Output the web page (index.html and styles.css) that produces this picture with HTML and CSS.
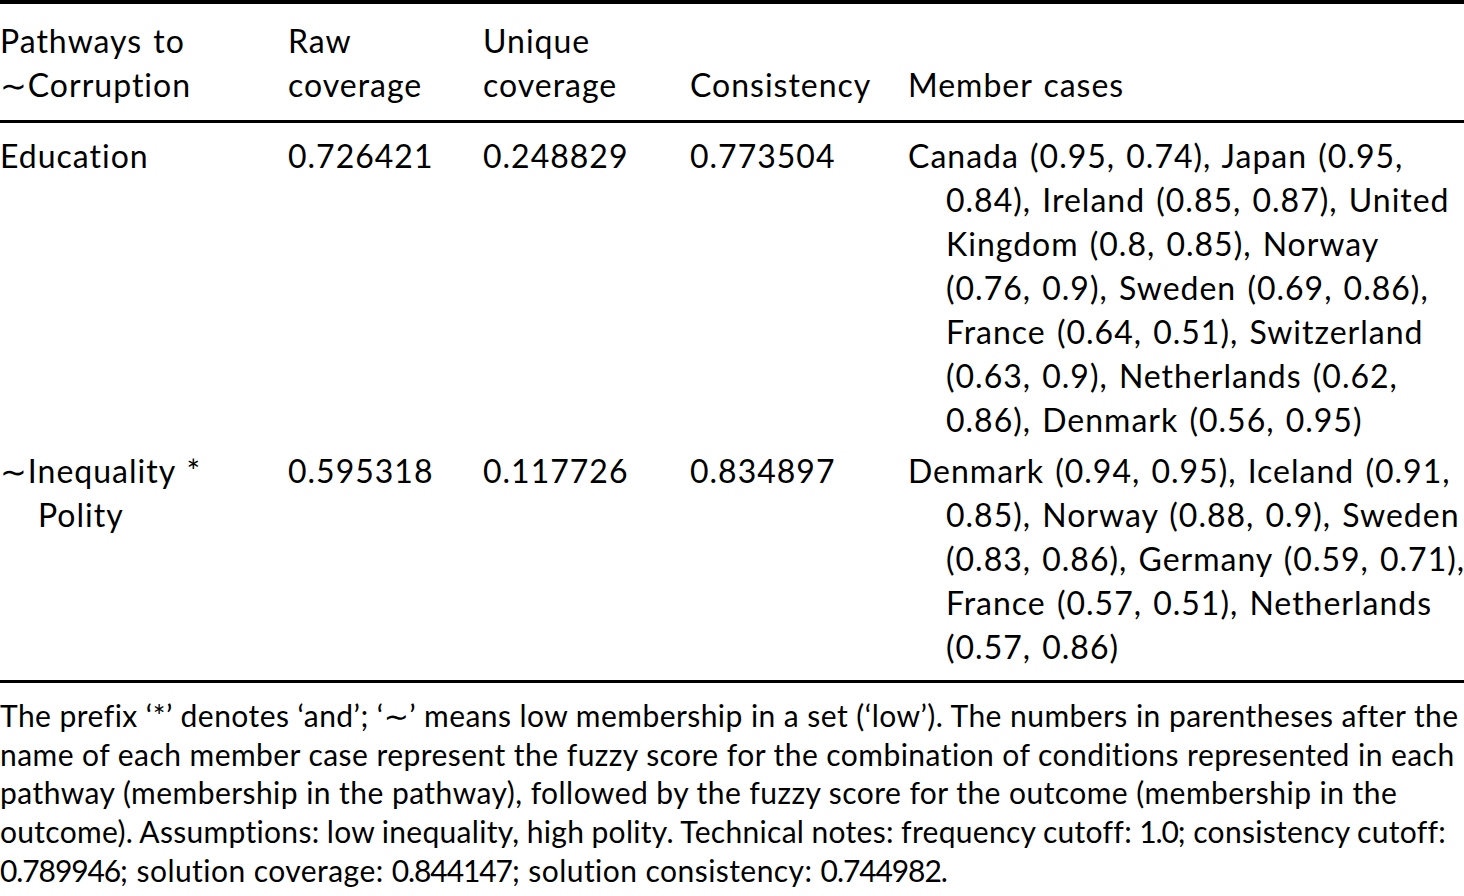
FILE: index.html
```html
<!DOCTYPE html>
<html lang="en">
<head>
<meta charset="utf-8">
<title>Pathways to ~Corruption</title>
<link rel="stylesheet" href="styles.css">
</head>
<body>
<div class="page">
  <div class="table">
    <div class="row head">
      <div class="cell">Pathways to<br>∼Corruption</div>
      <div class="cell">Raw<br>coverage</div>
      <div class="cell">Unique<br>coverage</div>
      <div class="cell bottom">Consistency</div>
      <div class="cell bottom">Member cases</div>
    </div>
    <div class="body">
      <div class="row">
        <div class="cell hang">Education</div>
        <div class="cell">0.726421</div>
        <div class="cell">0.248829</div>
        <div class="cell">0.773504</div>
        <div class="cell hang">Canada (0.95, 0.74), Japan (0.95,<br>0.84), Ireland (0.85, 0.87), United<br>Kingdom (0.8, 0.85), Norway<br>(0.76, 0.9), Sweden (0.69, 0.86),<br>France (0.64, 0.51), Switzerland<br>(0.63, 0.9), Netherlands (0.62,<br>0.86), Denmark (0.56, 0.95)</div>
      </div>
      <div class="row">
        <div class="cell hang">∼Inequality *<br>Polity</div>
        <div class="cell">0.595318</div>
        <div class="cell">0.117726</div>
        <div class="cell">0.834897</div>
        <div class="cell hang">Denmark (0.94, 0.95), Iceland (0.91,<br>0.85), Norway (0.88, 0.9), Sweden<br>(0.83, 0.86), Germany (0.59, 0.71),<br>France (0.57, 0.51), Netherlands<br>(0.57, 0.86)</div>
      </div>
    </div>
  </div>
  <p class="note">The prefix ‘*’ denotes ‘and’; ‘∼’ means low membership in a set (‘low’). The numbers in parentheses after the<br>name of each member case represent the fuzzy score for the combination of conditions represented in each<br>pathway (membership in the pathway), followed by the fuzzy score for the outcome (membership in the<br><span class="tight">outcome). Assumptions: low inequality, high polity. Technical notes: frequency cutoff: <span class="num">1.0</span>; consistency cutoff:</span><br><span class="num">0.789946</span>; solution coverage: <span class="num">0.844147</span>; solution consistency: <span class="num">0.744982</span>.</p>
</div>
</body>
</html>
```

FILE: styles.css
```css
html, body {
  margin: 0;
  padding: 0;
  background: #ffffff;
}

.page {
  width: 1464px;
  font-family: "Lato", "DejaVu Sans", sans-serif;
  color: #000000;
}

.table {
  border-bottom: 3px solid #000;
  font-size: 32px;
  letter-spacing: 1px;
  word-spacing: 2px;
}

.row {
  display: grid;
  grid-template-columns: 288px 195px 207px 218px 556px;
  line-height: 44px;
}

.head {
  border-top: 4px solid #000;
  border-bottom: 3px solid #000;
  padding: 14.5px 0 13.5px;
}

.body {
  padding: 7px 0 8px;
}

.body .row {
  padding: 3.5px 0;
}

.cell {
  white-space: nowrap;
}

.cell.bottom {
  align-self: end;
}

.hang {
  padding-left: 38px;
  text-indent: -38px;
}

.note {
  margin: 0;
  padding-top: 13px;
  font-size: 30px;
  letter-spacing: 0.45px;
  line-height: 38.7px;
  white-space: nowrap;
}

.tight {
  word-spacing: -0.7px;
  letter-spacing: 0.3px;
}

.num {
  letter-spacing: -1.1px;
}
```
